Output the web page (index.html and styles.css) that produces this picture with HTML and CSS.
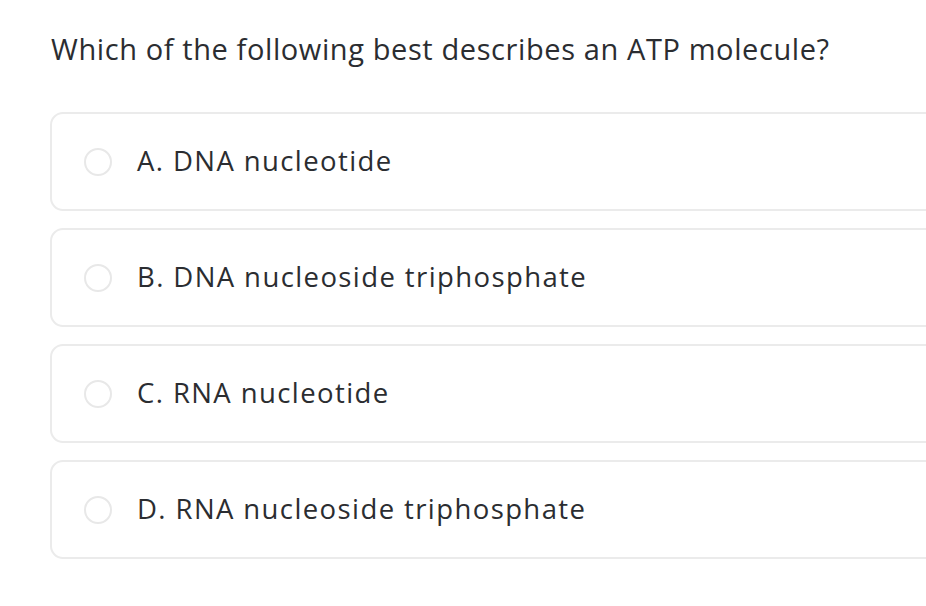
FILE: index.html
```html
<!DOCTYPE html>
<html>
<head>
<meta charset="utf-8">
<link rel="stylesheet" href="styles.css">
</head>
<body>
<div class="page">
  <h1 class="question">Which of the following best describes an ATP molecule?</h1>
  <div class="options">
    <div class="option"><span class="radio"></span><span class="label">A. DNA nucleotide</span></div>
    <div class="option"><span class="radio"></span><span class="label">B. DNA nucleoside triphosphate</span></div>
    <div class="option"><span class="radio"></span><span class="label">C. RNA nucleotide</span></div>
    <div class="option"><span class="radio"></span><span class="label">D. RNA nucleoside triphosphate</span></div>
  </div>
</div>
</body>
</html>
```
FILE: styles.css
```css
html, body {
  margin: 0;
  padding: 0;
  background: #ffffff;
  overflow: hidden;
}
.page {
  width: 926px;
  height: 606px;
  overflow: hidden;
  font-family: "Open Sans", "Liberation Sans", sans-serif;
  color: #2b2d31;
}
.question {
  margin: 0;
  padding: 31px 0 0 51px;
  font-size: 29px;
  font-weight: 400;
  line-height: 36px;
  letter-spacing: 0.6px;
  white-space: nowrap;
}
.options {
  display: flex;
  flex-direction: column;
  gap: 17px;
  margin: 45px 0 0 50px;
}
.option {
  box-sizing: border-box;
  width: 920px;
  height: 99px;
  border: 2px solid #ebebeb;
  border-radius: 13px;
  display: flex;
  align-items: center;
  padding-left: 32px;
}
.radio {
  box-sizing: border-box;
  width: 28px;
  height: 28px;
  border: 2px solid #e8e8e8;
  border-radius: 50%;
  flex: none;
}
.label {
  margin-left: 25px;
  font-size: 27.5px;
  line-height: 32px;
  letter-spacing: 1.4px;
  white-space: nowrap;
  position: relative;
  top: -1px;
}
```
